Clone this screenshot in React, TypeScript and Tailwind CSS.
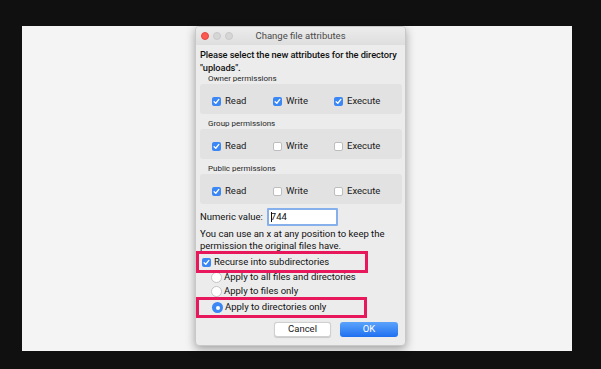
import React from "react";

const font = { fontFamily: "Roboto, 'Liberation Sans', sans-serif" };

function Check({ checked }: { checked: boolean }) {
  return checked ? (
    <span className="flex h-[9px] w-[9px] shrink-0 items-center justify-center rounded-[2px] bg-[#3a87f5]">
      <svg width="7" height="7" viewBox="0 0 8 8">
        <path d="M1.3 4.2 L3.2 6 L6.7 1.6" fill="none" stroke="white" strokeWidth="1.5" strokeLinecap="round" strokeLinejoin="round" />
      </svg>
    </span>
  ) : (
    <span className="block h-[9px] w-[9px] shrink-0 rounded-[2px] border border-[#bdbdbd] bg-white" />
  );
}

function Radio({ selected }: { selected: boolean }) {
  return selected ? (
    <span className="flex h-[11px] w-[11px] shrink-0 items-center justify-center rounded-full bg-[#3a87f5]">
      <span className="block h-[4px] w-[4px] rounded-full bg-white" />
    </span>
  ) : (
    <span className="block h-[11px] w-[11px] shrink-0 rounded-full border border-[#c4c4c4] bg-white" />
  );
}

const NAMES = ["Read", "Write", "Execute"];

function PermBox({ label, checks }: { label: string; checks: boolean[] }) {
  return (
    <div>
      <div className="h-[10px] whitespace-nowrap pl-[8px] text-[8px] leading-[10px] text-[#262626]">{label}</div>
      <div className="mr-[2px] flex h-[30px] items-start rounded-[3px] bg-[#e2e2e2] pl-[12px] pt-[12px]">
        {NAMES.map((n, i) => (
          <div key={n} className="flex w-[61px] items-center gap-[4px]">
            <Check checked={checks[i]} />
            <span className="whitespace-nowrap text-[9.5px] leading-[10px] text-[#1a1a1a]">{n}</span>
          </div>
        ))}
      </div>
    </div>
  );
}

export default function App() {
  return (
    <div className="h-[369px] w-[601px] overflow-hidden bg-[#101010] pl-[22px] pt-[25px]" style={font}>
      <div className="h-[325px] w-[550px] bg-[#f4f4f4]">
        <div className="ml-[173px] mt-[1px] flex h-[320px] w-[211px] flex-col overflow-hidden rounded-[4px] border border-[#c8c8c8] bg-[#ececec] shadow-[0_3px_10px_rgba(0,0,0,0.35)]">
          {/* title bar */}
          <div className="relative flex h-[18px] shrink-0 items-center bg-gradient-to-b from-[#ececec] to-[#dedede] pl-[5px]">
            <div className="flex gap-[4px]">
              <span className="block h-[8px] w-[8px] rounded-full border border-[#e2463f] bg-[#fd5753]" />
              <span className="block h-[8px] w-[8px] rounded-full border border-[#c9c9c9] bg-[#d6d6d6]" />
              <span className="block h-[8px] w-[8px] rounded-full border border-[#c9c9c9] bg-[#d6d6d6]" />
            </div>
            <div className="absolute inset-0 flex items-center justify-center whitespace-nowrap text-[9.5px] text-[#4a4a4a]">
              Change file attributes
            </div>
          </div>
          {/* content */}
          <div className="flex flex-col pl-[4px] pr-[1px] pt-[3px]">
            <div className="whitespace-nowrap text-[9.3px] font-medium leading-[13px] tracking-[-0.1px] text-[#111]">
              Please select the new attributes for the directory
              <br />
              "uploads".
            </div>
            <div className="flex flex-col gap-[5px]">
              <PermBox label="Owner permissions" checks={[true, true, true]} />
              <PermBox label="Group permissions" checks={[true, false, false]} />
              <PermBox label="Public permissions" checks={[true, false, false]} />
            </div>
            <div className="mt-[4px] flex h-[18px] items-center">
              <span className="whitespace-nowrap text-[9.5px] text-[#111]">Numeric value:</span>
              <div className="ml-[4px] flex h-[18px] w-[71px] items-center rounded-[1px] border-2 border-[#86b0ec] bg-white pl-[2px] text-[9.5px] text-[#111]">
                <span className="mr-[-1px] inline-block h-[10px] w-px bg-[#111]" />
                744
              </div>
            </div>
            <div className="mt-[2px] whitespace-nowrap text-[9.5px] leading-[12px] text-[#111]">
              You can use an x at any position to keep the
              <br />
              permission the original files have.
            </div>
          </div>
          {/* recurse */}
          <div className="relative z-10 mt-[-1px] flex h-[22px] w-[172px] shrink-0 items-center gap-[3px] border-[3px] border-[#e8185c] pl-[3px]">
            <Check checked={true} />
            <span className="whitespace-nowrap text-[9.5px] text-[#111]">Recurse into subdirectories</span>
          </div>
          <div className="mt-[-3px] flex h-[14px] shrink-0 items-center gap-[2px] pl-[15px]">
            <Radio selected={false} />
            <span className="whitespace-nowrap text-[9.5px] text-[#111]">Apply to all files and directories</span>
          </div>
          <div className="flex h-[15px] shrink-0 items-center gap-[2px] pl-[15px]">
            <Radio selected={false} />
            <span className="whitespace-nowrap text-[9.5px] text-[#111]">Apply to files only</span>
          </div>
          <div className="relative z-10 mt-[-2px] flex h-[21px] w-[171px] shrink-0 items-center gap-[2px] border-[3px] border-[#e8185c] pl-[13px]">
            <Radio selected={true} />
            <span className="whitespace-nowrap text-[9.5px] text-[#111]">Apply to directories only</span>
          </div>
          <div className="mt-[4px] flex shrink-0 gap-[9px] pl-[78px]">
            <button className="flex h-[15px] w-[57px] items-center justify-center rounded-[3px] border border-[#d0d0d0] bg-white text-[9.5px] text-[#1a1a1a] shadow-[0_0.5px_1px_rgba(0,0,0,0.15)]">
              Cancel
            </button>
            <button className="flex h-[15px] w-[58px] items-center justify-center rounded-[3px] bg-gradient-to-b from-[#5aa3fb] to-[#1f6ff0] text-[9.5px] text-white">
              OK
            </button>
          </div>
        </div>
      </div>
    </div>
  );
}
